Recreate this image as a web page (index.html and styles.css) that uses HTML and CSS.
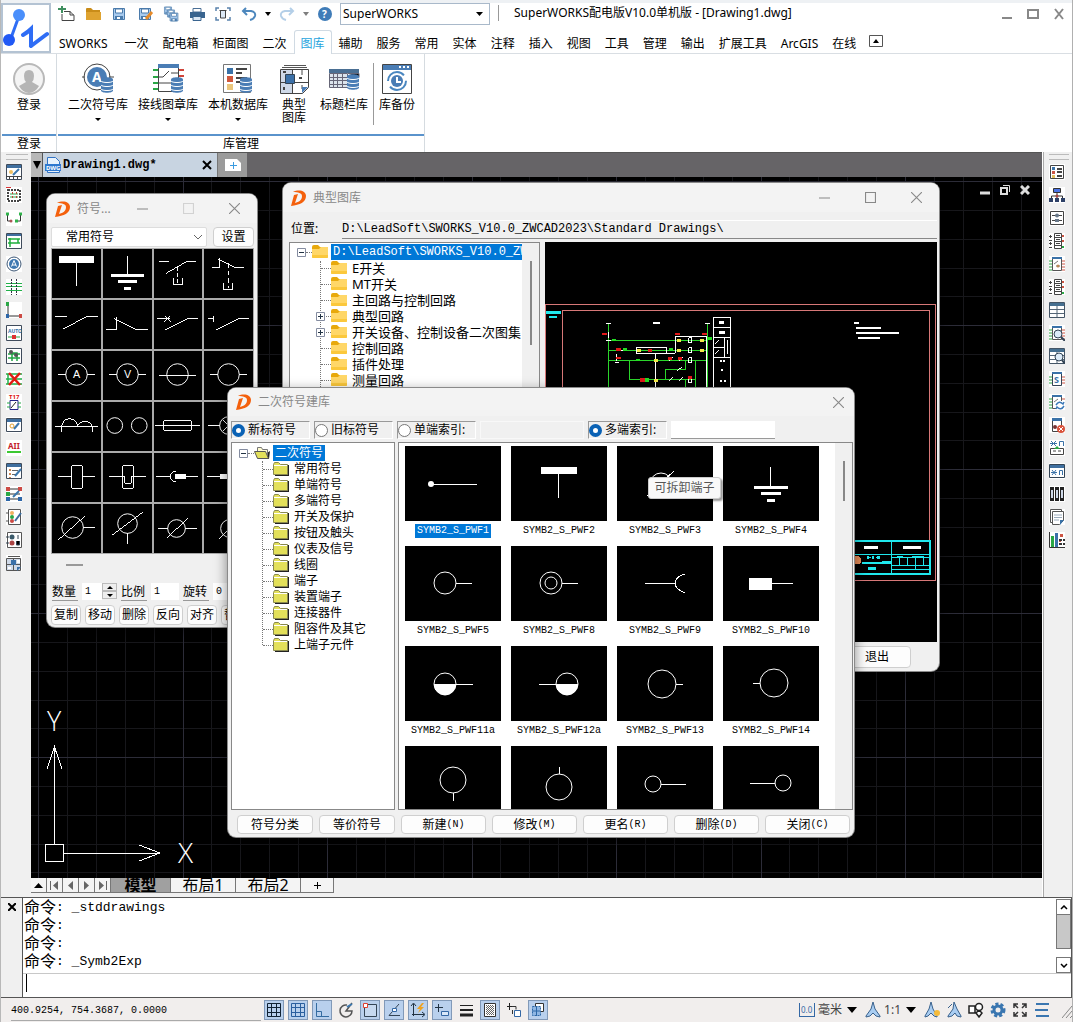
FILE: index.html
```html
<!DOCTYPE html>
<html lang="zh-CN">
<head>
<meta charset="utf-8">
<title>SuperWORKS配电版V10.0单机版 - [Drawing1.dwg]</title>
<link rel="stylesheet" href="styles.css">
</head>
<body>
<svg class="defs" aria-hidden="true">
  <defs>
    <pattern id="grid" width="289" height="144" patternUnits="userSpaceOnUse" x="7" y="4">
      <path d="M29.500 0V144M58.500 0V144M87.500 0V144M116.500 0V144M173.500 0V144M202.500 0V144M231.500 0V144M260.500 0V144M0 29.500H289M0 58.500H289M0 87.500H289M0 115.500H289" stroke="#17171b"/>
      <path d="M.5 0V144M145.500 0V144M0 .5H289" stroke="#2c2c38"/>
    </pattern>
  </defs>
  <symbol id="brand" viewBox="0 0 16 16"><path fill="#f4600c" d="M3 2C9-1 16 1 16 6c0 6-6 9-15 10L4 5l4-1-3 9c4-1 7-3 7-7 0-3-4-4-9-4z"/></symbol>
  <symbol id="folder" viewBox="0 0 16 14"><path fill="#e8a90c" d="M0 2q0-2 2-2h4l2 2h7v4H0z"/><path fill="#ffd768" d="M0 4h7l2-2h7v10q0 1-1 1H1q-1 0-1-1z"/><path fill="#fbc83c" d="M0 10h16v2q0 1-1 1H1q-1 0-1-1z"/></symbol>
  <symbol id="oldfolder" viewBox="0 0 16 14"><path fill="#222" d="M2 3h14v11H2z"/><path fill="#e3e05a" stroke="#8a8a50" d="M.5 12.500v-10l1-2h4l2 2h7v10z"/><path stroke="#fff" d="M1 3.500h13"/></symbol>
  <symbol id="openfolder" viewBox="0 0 16 14"><path fill="#222" d="M4 13h11l1-8z"/><path fill="#fffbd0" stroke="#777" d="M3.500 12V1.500h4l1 2h5V11"/><path fill="#e3e05a" stroke="#555" d="M.5 5.500h11l3 7h-11z"/></symbol>
  <symbol id="minus" viewBox="0 0 9 9"><path fill="#fff" stroke="#848ca0" d="M.5.5h8v8h-8z"/><path stroke="#234" d="M2 4.500h5"/></symbol>
  <symbol id="plus" viewBox="0 0 9 9"><path fill="#fff" stroke="#848ca0" d="M.5.5h8v8h-8z"/><path stroke="#234" d="M2 4.500h5M4.500 2v5"/></symbol>
  <symbol id="db" viewBox="0 0 12 16"><path fill="#4a7db5" d="M0 2.500C0-.5 12-.5 12 2.500v11c0 3-12 3-12 0z"/><path fill="none" stroke="#fff" d="M0 4c1 2 11 2 12 0M0 8c1 2 11 2 12 0M0 12c1 2 11 2 12 0"/></symbol>
  <symbol id="floppy" viewBox="0 0 14 14"><path fill="#a9cbee" stroke="#4b7bab" d="M1.500 1.500h11v11h-11z"/><path fill="#fff" stroke="#4b7bab" d="M3.500 2h7v4h-7z"/><path fill="#4b7bab" d="M3 9h8v4H3z"/><path fill="#fff" d="M5 10h3v2H5z"/></symbol>

  <symbol id="l1" viewBox="0 0 16 16"><path fill="#fff" stroke="#3f4b5b" d="M.5.500h15v15H.5z"/><path fill="#3f6f9f" d="M1 1h14v3H1z"/><path stroke="#444" d="M0 12.500h16M3.500 12v3M7.500 12v3M11.500 12v3"/><circle cx="5" cy="8" r="2" fill="#f0c060"/><path stroke="#3d78ad" stroke-width="2" d="m7 11 6-6"/></symbol>
  <symbol id="l2" viewBox="0 0 16 16"><path fill="#fff" stroke="#444" stroke-dasharray="2 1" stroke-width="2" d="M2 3h12v11H2z"/><path stroke="#d33" d="M0 .5h5"/><path stroke="#2fa34a" d="M4 7h8M4 10h8"/><path stroke="#b43" stroke-dasharray="2 2" d="M6.500 5v7M10.500 5v7"/></symbol>
  <symbol id="l3" viewBox="0 0 16 16"><path fill="none" stroke="#333" d="M1.500 3v8h4M14.500 3v8h-4"/><path stroke="#2fb24a" stroke-width="3" d="M0 4h3M13 4h3M9 11h3"/><circle cx="5" cy="11" r="1.500" fill="#a55"/></symbol>
  <symbol id="l4" viewBox="0 0 16 16"><path fill="#fff" stroke="#3f4b5b" d="M.5.5h15v15H.5z"/><path fill="#3f6f9f" d="M1 1h14v2H1z"/><path fill="none" stroke="#1fae3c" stroke-width="1.500" d="M2 6h12M2 10h12M4 5v9M12 6v4"/></symbol>
  <symbol id="l5" viewBox="0 0 16 16"><circle cx="8" cy="8" r="7" fill="#fff" stroke="#3b5573"/><circle cx="8" cy="8" r="5" fill="#3f78b0"/><path fill="none" stroke="#fff" d="m5.500 10.500 2.500-6 2.500 6M6 9h4"/></symbol>
  <symbol id="l6" viewBox="0 0 16 16"><path fill="none" stroke="#22b04a" d="M0 4.500h16M0 7.500h16M0 11.500h16"/><path stroke="#334" stroke-dasharray="2 1" d="M5.500 0v16M10.500 0v16"/></symbol>
  <symbol id="l7" viewBox="0 0 16 16"><path fill="none" stroke="#333" d="M2 2v12h12"/><path fill="#2aa745" d="M0 0h3v4H0z"/><path fill="#2d66a8" d="M0 12h3v4H0z"/><path fill="#cc4a44" d="M13 12h3v4h-3z"/></symbol>
  <symbol id="l9" viewBox="0 0 16 16"><path fill="#fff" stroke="#3f4b5b" d="M.5.5h15v15H.5z"/><path fill="none" stroke="#22a544" stroke-width="1.500" d="M2 6h12M2 10h12M6 13V5h5v8"/><circle cx="5" cy="4" r="2" fill="#555"/><circle cx="10" cy="7" r="2" fill="#555"/></symbol>
  <symbol id="l10" viewBox="0 0 16 16"><path fill="none" stroke="#22b04a" stroke-width="1.500" d="M0 3h16M0 8h16M0 13h16M2 3v10"/><path stroke="#e11b12" stroke-width="2.500" d="m3 2 11 12M14 2 3 14"/></symbol>
  <symbol id="l12" viewBox="0 0 16 16"><path fill="#fff" stroke="#3f4b5b" d="M.5 1.500h15v13H.5z"/><path fill="#3f6f9f" d="M1 2h14v3H1z"/><circle cx="6" cy="9" r="2" fill="#fff" stroke="#e0a030"/><path stroke="#3d78ad" stroke-width="2" d="m8 12 5-6"/></symbol>
  <symbol id="l14" viewBox="0 0 16 16"><path fill="#fff" stroke="#3f4b5b" d="M.5.5h15v15H.5z"/><path fill="#3f6f9f" d="M1 1h14v3H1z"/><path stroke="#c85" stroke-width="2" stroke-dasharray="2 2" d="M4 6v9"/><path stroke="#666" d="M6 7.500h6M6 11.500h4"/><path stroke="#3d78ad" stroke-width="2" d="m9 13 6-7"/></symbol>
  <symbol id="l15" viewBox="0 0 16 16"><path stroke="#333" d="M2 3h12M2 8h12M2 13h12"/><path fill="#cc4a44" d="M0 1h4v4H0zM12 1h4v4h-4z"/><path fill="#2aa745" d="M0 6h4v4H0z"/><path fill="#2d66a8" d="M0 11h4v4H0zM12 11h4v4h-4z"/><path stroke="#3d78ad" stroke-width="2" d="m7 11 6-6"/></symbol>
  <symbol id="l16" viewBox="0 0 16 16"><path fill="#fff" stroke="#555" d="M2.500.5h12v15h-12z"/><circle cx="6" cy="4" r="2" fill="#f0b060"/><circle cx="6" cy="8" r="2" fill="#2aa745"/><circle cx="6" cy="12" r="2" fill="#cc4a44"/><path stroke="#3d6c9c" stroke-width="2" d="m9 12 6-8"/><path stroke="#555" d="M0 4h2M0 12h2"/></symbol>
  <symbol id="l17" viewBox="0 0 16 16"><path fill="#fff" stroke="#555" d="M1.500.5h14v15h-14z"/><circle cx="6" cy="5" r="2.500" fill="#3a5a6a"/><circle cx="6" cy="11" r="2.500" fill="#a44"/><path stroke="#345" d="M12 3v4M10.500 9v4h3V9M0 5h3M0 11h3"/></symbol>
  <symbol id="l18" viewBox="0 0 16 16"><path fill="#cfd9e8" stroke="#555" d="M.5 3.500h14v12H.5z"/><path stroke="#555" d="M2 1.500h12M7.500 3v12M0 9.500h15"/><path fill="#3b70a8" d="M5 5h5v5H5zM11 12h4l-4 4z"/><path fill="#fff" d="M2 12h3v2H2zM11 5h3v3h-3z"/></symbol>

  <symbol id="r1" viewBox="0 0 16 16"><path fill="#fff" stroke="#444" d="M1.500 1.500h13v13h-13z"/><path stroke="#444" stroke-width="2" d="M8 5h5M8 8h5M8 12h5"/><path fill="#3a72a8" d="M3 3h3v3H3z"/><path fill="#c54" d="M3 7h3v3H3z"/><path fill="#e5c060" d="M3 11h3v3H3z"/></symbol>
  <symbol id="r2" viewBox="0 0 16 16"><path fill="#4b74e8" stroke="#333" d="M4.500 1.500h7v4h-7z"/><path fill="none" stroke="#333" d="M8 5v4M2.500 12V9h11v3M8 9v3"/><path fill="#2c3f66" d="M0 11h4v4H0zM6 11h4v4H6zM12 11h4v4h-4z"/><circle cx="8" cy="9" r="1.500" fill="#a44"/></symbol>
  <symbol id="r3" viewBox="0 0 16 16"><path fill="#fff" stroke="#444" d="M1.500 1.500h13v13h-13z"/><path stroke="#444" d="M3 5.500h10M3 10.500h10"/><circle cx="8" cy="5.500" r="2" fill="#68788a"/><path fill="#68788a" d="M6 9h4v3H6z"/></symbol>
  <symbol id="r4" viewBox="0 0 16 16"><path fill="#fff" stroke="#444" d="M5.500.5h7v15h-7zM5.500 4.500h7M5.500 8.500h7M5.500 12.500h7M7 2.500h4M7 6.500h4M7 10.500h4"/><path stroke="#444" d="M0 3.500h3M1.500 2v3M0 7.500h3M0 10.500h3M1.500 9v3M0 14.500h3"/><path stroke="#2aa745" stroke-width="2" d="M13 14h2"/><path stroke="#c54" stroke-width="2" d="M13 3h2M13 8h2"/></symbol>
  <symbol id="r5" viewBox="0 0 16 16"><path fill="#fff" stroke="#555" d="M3.500 1.500h9v13h-9z"/><path fill="#3a72a8" d="M3 1h10v2H3z"/><path stroke="#2aa745" d="M0 5h3M0 8h3M0 11h3M0 14h3"/><path stroke="#c54" d="M13 5h3M13 8h3M13 11h3M13 14h3"/><path stroke="#777" d="m5 8 4-3M7 10h4"/><circle cx="9" cy="10" r="1.500" fill="#b85"/></symbol>
  <symbol id="r6" viewBox="0 0 16 16"><path fill="#fff" stroke="#456" d="M.5.500h15v15H.5z"/><path fill="#456f90" d="M1 1h14v3H1z"/><path stroke="#567" d="M1 7.500h14M1 11.500h14M8 4v11"/></symbol>
  <symbol id="r7" viewBox="0 0 16 16"><use href="#r5"/><circle cx="9" cy="9" r="4" fill="#dcebf8" stroke="#345"/><path stroke="#345" stroke-width="2" d="m12 12 4 4"/></symbol>
  <symbol id="r8" viewBox="0 0 16 16"><use href="#r6"/><circle cx="10" cy="9" r="4" fill="#dcebf8" stroke="#345"/><path stroke="#345" stroke-width="2" d="m13 12 3 4"/></symbol>
  <symbol id="r10" viewBox="0 0 16 16"><use href="#r5"/><path fill="#fff" d="M7 7h9v9H7z"/><path fill="none" stroke="#3a78b8" stroke-width="1.500" d="M7 11q3-5 7-1l1-2M15 12q-3 5-7 1l-1 2"/></symbol>
  <symbol id="r11" viewBox="0 0 16 16"><path fill="#fff" stroke="#444" d="M3.500 1.500h9v13h-9z"/><path fill="#3a72a8" d="M3 1h10v3H3z"/><circle cx="6" cy="10" r="2" fill="#733"/><circle cx="12" cy="12" r="4" fill="#d9533c"/><path stroke="#fff" d="m10 10 4 4M14 10l-4 4"/></symbol>
  <symbol id="r12" viewBox="0 0 16 16"><path fill="none" stroke="#3a72a8" d="m2 1 5 5M7 1 2 6M1 3.500h7M10.500 6V1.500h4V6"/><path fill="none" stroke="#444" d="M6 8.500H1.500v6h13v-6H10M4 11h3M9 11h3"/><path fill="#2aa745" d="m5 9 3-3 3 3z"/></symbol>
  <symbol id="r13" viewBox="0 0 16 16"><path fill="#fff" stroke="#345" d="M.5 1.500h15v13H.5z"/><path fill="#3f6f9f" d="M1 2h14v3H1z"/><path fill="none" stroke="#3a72a8" d="m3 7 4 5M7 7l-4 5M2 9.500h6M10.500 12V7.500h3V12"/></symbol>
  <symbol id="r14" viewBox="0 0 16 16"><path fill="#cfd9e8" stroke="#222" d="M1.500 1.500h3v13h-3zM6.500 1.500h3v13h-3zM11.500 1.500h3v13h-3z"/><path fill="#222" d="M1 1h4v3H1zM6 1h4v3H6zM11 1h4v3h-4zM1 12h4v3H1zM6 12h4v3H6zM11 12h4v3h-4z"/></symbol>
  <symbol id="r15" viewBox="0 0 16 16"><path fill="#fff" stroke="#555" d="M1.500.5h11v13h-11z"/><path fill="#fff" stroke="#555" d="M3.500 2.500h11v9l-4 4h-7z"/><path stroke="#9ab" d="M5 6h8M5 8.500h8M5 11h5"/><path fill="#3a72a8" d="M11 11h4l-4 5z"/></symbol>
  <symbol id="r16" viewBox="0 0 16 16"><path fill="none" stroke="#333" d="M.5 0v15.500H16"/><path fill="#2aa745" d="M2 4h3v11H2z"/><path fill="#3a72a8" d="M6 1h3v14H6z"/><path fill="#c54" d="M11 2h3v3h-3zM10 7h2v3h-2z"/><path stroke="#333" stroke-width="2" stroke-dasharray="3 1" d="M10 8h6M10 12h6"/></symbol>
</svg>

<header class="top">
  <button class="logo" aria-label="应用菜单"><svg viewBox="0 0 48 48" width="48" height="48"><g fill="none" stroke="#2f6df5" stroke-width="4" stroke-linecap="round"><path stroke-width="3" d="M17 12 9 34"/><path d="M21 31q5-3 8-6v17M29 42 45 30"/></g><circle cx="17" cy="11" r="6" fill="#4a8ffb"/><circle cx="7" cy="36" r="6" fill="#2159f5"/></svg></button>
  <div class="titlebar">
    <div class="quick">
      <button aria-label="新建"><svg viewBox="0 0 18 16"><path fill="#fff" stroke="#444" d="M6 5.500h6l4 4v5H4V8M12 5v4h4"/><path stroke="#3f8f5f" stroke-width="2" d="M4 0v7M0 3h8"/></svg></button>
      <button aria-label="打开"><svg viewBox="0 0 18 16"><path fill="#c98c19" d="M2 3q0-1 1-1h4l2 2h7v3H2z"/><path fill="#dfa330" d="M2 6h15v8H2z"/></svg></button>
      <button aria-label="保存"><svg viewBox="0 0 18 16"><use href="#floppy" x="2" y="1" width="14" height="14"/></svg></button>
      <button aria-label="另存为"><svg viewBox="0 0 18 16"><use href="#floppy" x="2" y="1" width="14" height="14"/><path stroke="#e78b29" stroke-width="3" d="m10 13 6-7"/></svg></button>
      <button aria-label="全部保存"><svg viewBox="0 0 18 16"><use href="#floppy" x="1" width="10" height="9"/><use href="#floppy" x="4" y="3" width="10" height="9"/><use href="#floppy" x="7" y="6" width="10" height="10"/></svg></button>
      <button aria-label="打印"><svg viewBox="0 0 18 16"><path fill="#fff" stroke="#4a6f96" d="M5 2.500h8V6H5z"/><path fill="#39648f" d="M2 6h15v6H2z"/><path fill="#dce8f5" stroke="#39648f" d="M5 10.500h8v4H5z"/></svg></button>
      <button aria-label="打印预览"><svg viewBox="0 0 18 16"><path fill="none" stroke="#5a82ad" stroke-width="1.500" d="M2 5V2h3M13 2h3v3M2 11v3h3M13 14h3v-3"/><path fill="#dce8f5" stroke="#444" d="M5.500 4.500h7M6.500 5v7h5V5"/></svg></button>
      <button aria-label="撤销"><svg viewBox="0 0 18 16"><path fill="none" stroke="#4d87bd" stroke-width="2" d="M6 2 3 5l4 4M3 5h8q5 1 4 5-1 3-5 4"/></svg></button>
      <button class="caret" aria-label="撤销列表"><svg viewBox="0 0 6 4"><path d="M0 0h6L3 4z"/></svg></button>
      <button aria-label="重做"><svg viewBox="0 0 18 16"><path fill="none" stroke="#b4cfe8" stroke-width="2" d="m12 2 3 3-4 4M15 5H7Q2 6 3 10q1 3 5 4"/></svg></button>
      <button class="caret dim" aria-label="重做列表"><svg viewBox="0 0 6 4"><path d="M0 0h6L3 4z"/></svg></button>
      <button aria-label="帮助"><svg viewBox="0 0 18 16"><circle cx="9" cy="8" r="7" fill="#3f7cb8"/><text x="6" y="12" font-size="10" font-weight="bold" fill="#fff">?</text></svg></button>
    </div>
    <div class="combo workspace-combo"><select aria-label="工作空间"><option>SuperWORKS</option></select><svg class="arr" viewBox="0 0 7 4"><path d="M0 0h7L3.500 4z"/></svg></div>
    <h1>SuperWORKS配电版V10.0单机版 - [Drawing1.dwg]</h1>
    <div class="winctl">
      <button aria-label="最小化"><svg viewBox="0 0 12 12"><path stroke="#888" stroke-width="2" d="M1 10h10"/></svg></button>
      <button aria-label="最大化"><svg viewBox="0 0 12 12"><path fill="none" stroke="#888" stroke-width="2" d="M1 2h10v8H1z"/></svg></button>
      <button aria-label="关闭"><svg viewBox="0 0 12 12"><path stroke="#888" stroke-width="2" d="m2 1 8 10M10 1 2 11"/></svg></button>
    </div>
  </div>
  <nav class="tabs">
    <a href="#">SWORKS</a><a href="#">一次</a><a href="#">配电箱</a><a href="#">柜面图</a><a href="#">二次</a><a href="#" class="on">图库</a><a href="#">辅助</a><a href="#">服务</a><a href="#">常用</a><a href="#">实体</a><a href="#">注释</a><a href="#">插入</a><a href="#">视图</a><a href="#">工具</a><a href="#">管理</a><a href="#">输出</a><a href="#">扩展工具</a><a href="#">ArcGIS</a><a href="#">在线</a>
    <button class="fold" aria-label="折叠功能区"><svg viewBox="0 0 14 12" width="14" height="12"><path fill="#fff" stroke="#555" d="M.5.5h13v11H.5z"/><path d="M4 8h6L7 4z"/></svg></button>
  </nav>
</header>

<section class="ribbon">
  <div class="group login">
    <div class="tools"><button><svg viewBox="0 0 32 32"><circle cx="16" cy="16" r="15" fill="#f4f4f4" stroke="#b9b9b9" stroke-width="2"/><path fill="#b5b5b5" d="M16 7q5 0 5 6 0 4-2 6l7 4q-4 7-10 7T6 23l7-4q-2-2-2-6 0-6 5-6z"/></svg>登录</button></div>
    <h2>登录</h2>
  </div>
  <div class="group library">
    <div class="tools">
      <button><svg viewBox="0 0 32 32"><circle cx="15" cy="14" r="13" fill="#fff" stroke="#444"/><circle cx="15" cy="14" r="10" fill="#4a7db5"/><path stroke="#444" d="M0 14h3M27 14h5"/><text x="10" y="19" font-size="14" font-weight="bold" fill="#fff">A</text><use href="#db" x="19" y="14" width="12" height="16"/></svg>二次符号库<i class="tri"></i></button>
      <button><svg viewBox="0 0 32 32"><path fill="#fff" stroke="#444" d="M6.500 1.500h20v27h-20z"/><path fill="#4a7db5" d="M6 1h21v4H6z"/><path stroke="#2aa745" stroke-width="2" d="M1 7h5M1 14h5M1 20h5M1 26h5"/><path stroke="#d0453a" stroke-width="2" d="M27 7h5M27 13h5"/><path fill="none" stroke="#444" d="M7 14h4l6-6M19 10h7M7 20h13"/><use href="#db" x="19" y="14" width="12" height="16"/></svg>接线图章库<i class="tri"></i></button>
      <button><svg viewBox="0 0 32 32"><path fill="#fff" stroke="#777" d="M1.500 1.500h27v28h-27z"/><path fill="#3a72a8" d="M5 5h6v6H5z"/><path fill="#d0583c" d="M5 13h6v6H5z"/><path fill="#eac67c" d="M5 21h6v6H5z"/><path stroke="#444" stroke-width="2" d="M14 6h11M14 10h6M14 15h11M14 19h4"/><use href="#db" x="18" y="14" width="12" height="16"/></svg>本机数据库<i class="tri"></i></button>
      <button><svg viewBox="0 0 32 32"><path stroke="#555" d="M6 2.500h22M4 4.500h25"/><path fill="#fff" stroke="#444" d="M2.500 6.500h28v18l-6 6h-22z"/><path fill="#cfd9e8" d="M3 7h11v23H3z"/><path stroke="#444" d="M14.500 7v23M3 19.500h27M24 7v5M24 22v4"/><path fill="#3b70a8" stroke="#345" d="M7.500 11.500h9v9h-9z"/><path fill="#4a7db5" d="M24 24h6l-6 6z"/><path stroke="#444" stroke-width="2" d="M6 24v3M5 9h3M21 15h3"/></svg>典型<br>图库</button>
      <button><svg viewBox="0 0 32 32"><path fill="#4a6f93" d="M1 6h30v4H1z"/><path fill="#dce4ec" stroke="#667" d="M1.500 10.500h18v14h-18z"/><path stroke="#667" d="M1 14.500h18M1 17.500h18M1 21.500h18M5.500 10v14M9.500 10v14M14.500 10v14M20 10.500h11v4"/><use href="#db" x="19" y="11" width="12" height="16"/></svg>标题栏库</button>
      <button class="backup"><svg viewBox="0 0 32 32"><path fill="#fff" stroke="#444" d="M1.500 1.500h29v29h-29z"/><path fill="#4a7db5" d="M2 2h28v5H2z"/><path stroke="#fff" stroke-width="2" stroke-dasharray="2 2" d="M18 4h12"/><circle cx="16" cy="18" r="9" fill="none" stroke="#4a87c0" stroke-width="2" stroke-dasharray="22 6"/><circle cx="16" cy="18" r="6" fill="#4a7db5"/><path fill="none" stroke="#fff" stroke-width="2" d="M16 14v5h4"/></svg>库备份</button>
    </div>
    <h2>库管理</h2>
  </div>
</section>

<main class="work">
  <div class="toolbar" role="toolbar" aria-label="左工具栏">
    <button><svg><use href="#l1"/></svg></button><button><svg><use href="#l2"/></svg></button><button><svg><use href="#l3"/></svg></button><button><svg><use href="#l4"/></svg></button><button><svg><use href="#l5"/></svg></button><button><svg><use href="#l6"/></svg></button><button><svg><use href="#l7"/></svg></button>
    <button><svg viewBox="0 0 16 16"><path fill="#fff" stroke="#3f4b5b" d="M.5.5h15v15H.5z"/><text x="2" y="8" font-size="5" font-weight="bold" fill="#3876ad">AUTO</text><path stroke="#2aa745" d="M2 12h12"/><path fill="#d33" d="M6 10h4v4H6z"/></svg></button>
    <button><svg><use href="#l9"/></svg></button><button><svg><use href="#l10"/></svg></button>
    <button><svg viewBox="0 0 16 16"><text x="3" y="5" font-size="6" font-weight="bold" fill="#d11">T17</text><path fill="#fff" stroke="#228" d="M4 6.500h8v9H4z"/><path stroke="#22a544" d="M1 9h3M1 13h3M12 9h3M12 13h3"/><path stroke="#222" d="m5 14 5-6"/></svg></button>
    <button><svg><use href="#l12"/></svg></button>
    <button><svg viewBox="0 0 16 16"><text x="2" y="9" font-size="8" font-weight="bold" fill="#c3202a">AII</text><path stroke="#3cc832" stroke-width="2" d="M1 12h14"/></svg></button>
    <button><svg><use href="#l14"/></svg></button><button><svg><use href="#l15"/></svg></button><button><svg><use href="#l16"/></svg></button><button><svg><use href="#l17"/></svg></button><button><svg><use href="#l18"/></svg></button>
  </div>

  <div class="document">
    <div class="doctabs">
      <button class="list" aria-label="文档列表"><svg viewBox="0 0 8 8" width="8" height="8"><path d="M0 0h8L4 8z"/></svg></button>
      <div class="doctab"><svg viewBox="0 0 16 16" width="16" height="16"><path fill="#e8f2fc" stroke="#3273c4" d="M2.500.5h8l4 4v11h-12z"/><path fill="#2e78cf" d="M0 7h16v7H0z"/><text x="1" y="13" font-size="6" font-weight="bold" fill="#fff">DWG</text></svg><span>Drawing1.dwg*</span><button aria-label="关闭文档"><svg viewBox="0 0 10 10" width="10" height="10"><path stroke="#000" stroke-width="2" d="m1 1 8 8M9 1 1 9"/></svg></button></div>
      <button class="newtab" aria-label="新建文档"><svg viewBox="0 0 16 12" width="16" height="12"><path fill="#fff" d="M0 0h12l4 4v8H0z"/><path stroke="#3a9be0" d="M5 6.500h7M8.500 3v7"/></svg></button>
    </div>

    <div class="canvas">
      <svg class="grid" width="100%" height="100%"><rect width="100%" height="100%" fill="url(#grid)"/></svg>
      <svg class="ucs" viewBox="0 0 160 160" width="160" height="160" fill="none" stroke="#fff" shape-rendering="crispEdges"><path d="M9.500 140.500h18v17h-18zM18.500 140V43M11 65l7.500-22L26 65M28 149.500h96M103 141l21 8-21 8"/><text x="11" y="27" font-size="27" fill="#fff" stroke="none">Y</text><text x="142" y="159" font-size="28" fill="#fff" stroke="none">X</text></svg>
      <div class="mdi">
        <button aria-label="最小化"><svg viewBox="0 0 10 10" width="10" height="10"><path stroke="#ddd" stroke-width="3" d="M0 8h10"/></svg></button>
        <button aria-label="还原"><svg viewBox="0 0 10 10" width="10" height="10"><path fill="none" stroke="#ddd" stroke-width="2" d="M1 3h6v6H1z"/><path fill="none" stroke="#ddd" d="M3 .5h6.500V7"/></svg></button>
        <button aria-label="关闭"><svg viewBox="0 0 10 10" width="10" height="10"><path stroke="#ddd" stroke-width="3" d="m1 1 8 8M9 1 1 9"/></svg></button>
      </div>

      <section class="win symbols">
        <div class="wtitle"><svg width="16" height="16"><use href="#brand"/></svg><h3>符号...</h3><span class="wctl"><button aria-label="最小化"><svg viewBox="0 0 10 10"><path d="M0 5.500h10"/></svg></button><button class="off" aria-label="最大化"><svg viewBox="0 0 10 10"><path d="M.5.5h9v9h-9z"/></svg></button><button aria-label="关闭"><svg viewBox="0 0 10 10"><path d="m0 0 10 10M10 0 0 10"/></svg></button></span></div>
        <div class="pick"><div class="combo"><select aria-label="符号分类"><option>常用符号</option></select><svg class="chev" viewBox="0 0 10 6"><path fill="none" stroke="#666" d="m1 1 4 4 4-4"/></svg></div><button class="btn">设置</button></div>
        <div class="cells">
          <button><svg viewBox="0 0 50 50"><path class="f" d="M7 7h36v7H7z"/><path d="M24.500 14v24"/></svg></button>
          <button><svg viewBox="0 0 50 50"><path d="M24.500 7v20"/><path class="f" d="M8 26h34v3H8zM15 32h20v3H15zM21 39h8v3h-8z"/></svg></button>
          <button><svg viewBox="0 0 50 50"><path d="M6 13h10M13 25l21-12h10"/><path stroke-dasharray="5 2" d="M25.500 17v18"/><path d="M20.500 30v6h10v-6"/></svg></button>
          <button><svg viewBox="0 0 50 50"><path d="M8 19h8V9M14 10l18 9h9"/><path stroke-dasharray="5 3" d="M24.500 14v26"/><path d="M19.500 35v6h10v-6"/></svg></button>
          <button><svg viewBox="0 0 50 50"><path d="M3 17h12M11 30l24-13h12"/></svg></button>
          <button><svg viewBox="0 0 50 50"><path d="M3 30h11V17M11 19l23 11h12"/></svg></button>
          <button><svg viewBox="0 0 50 50"><path d="M4 19h13M12 16l6 6M18 16l-6 6M12 31l23-12h11"/></svg></button>
          <button><svg viewBox="0 0 50 50"><path d="M4 19h5M9.500 16v6M12 31l24-12h10"/></svg></button>
          <button><svg viewBox="0 0 50 50"><circle cx="25" cy="24" r="11"/><path d="M6 24h8M36 24h8"/><text x="25" y="28">A</text></svg></button>
          <button><svg viewBox="0 0 50 50"><circle cx="25" cy="24" r="11"/><path d="M6 24h8M36 24h8"/><text x="25" y="28">V</text></svg></button>
          <button><svg viewBox="0 0 50 50"><circle cx="25" cy="24" r="11"/><path d="M6 25h38"/></svg></button>
          <button><svg viewBox="0 0 50 50"><circle cx="25" cy="24" r="11"/><path d="M6 24h8M36 24h8"/></svg></button>
          <button><svg viewBox="0 0 50 50"><path d="M3 25h44M10 31v-6a8 8 0 0 1 16 0 8 8 0 0 1 15 0v6"/></svg></button>
          <button><svg viewBox="0 0 50 50"><circle cx="12" cy="24" r="8"/><circle cx="37" cy="24" r="8"/></svg></button>
          <button><svg viewBox="0 0 50 50"><path d="M11 19h28v10H11zM2 24h46"/></svg></button>
          <button><svg viewBox="0 0 50 50"><circle cx="25" cy="24" r="9"/><path d="M4 24h12M34 24h12M19 18l12 12M31 18 19 30"/></svg></button>
          <button><svg viewBox="0 0 50 50"><path d="M20 13h11v23H20zM6 24h14M31 24h13"/></svg></button>
          <button><svg viewBox="0 0 50 50"><path d="M20 13h11v23H20zM6 24h16v7h7v-7h15"/></svg></button>
          <button><svg viewBox="0 0 50 50"><path d="M3 24h15M23 19q-5 0-5 5t5 5M34 24h12"/><path class="f" d="M22 21h12v6H22z"/></svg></button>
          <button><svg viewBox="0 0 50 50"><path d="M3 24h43"/><path class="f" d="M16 21h12v6H16z"/></svg></button>
          <button><svg viewBox="0 0 50 50"><circle cx="21" cy="24" r="11"/><path d="M6 37 34 12M32 24h12"/></svg></button>
          <button><svg viewBox="0 0 50 50"><circle cx="25" cy="20" r="10"/><path d="M9 32 41 8M25 30v11"/></svg></button>
          <button><svg viewBox="0 0 50 50"><circle cx="24" cy="25" r="9"/><path d="m14 35 22-21M5 25h10M33 25h12"/></svg></button>
          <button><svg viewBox="0 0 50 50"><circle cx="26" cy="25" r="9"/><path d="m15 36 22-21"/></svg></button>
        </div>
        <div class="hscroll"><i></i></div>
        <div class="fields"><label for="qty">数量</label><span class="spin"><input id="qty" value="1"><span><button aria-label="增加"><svg viewBox="0 0 6 3"><path d="M0 3h6L3 0z"/></svg></button><button aria-label="减少"><svg viewBox="0 0 6 3"><path d="M0 0h6L3 3z"/></svg></button></span></span><label for="ratio">比例</label><input id="ratio" value="1"><label for="rot">旋转</label><input id="rot" value="0"></div>
        <div class="actions"><button class="btn">复制</button><button class="btn">移动</button><button class="btn">删除</button><button class="btn">反向</button><button class="btn">对齐</button><button class="btn">替换</button></div>
      </section>

      <section class="win typical">
        <div class="wtitle"><svg width="16" height="16"><use href="#brand"/></svg><h3>典型图库</h3><span class="wctl"><button aria-label="最小化"><svg viewBox="0 0 10 10"><path d="M0 5.500h10"/></svg></button><button aria-label="最大化"><svg viewBox="0 0 10 10"><path d="M.5.5h9v9h-9z"/></svg></button><button aria-label="关闭"><svg viewBox="0 0 10 10"><path d="m0 0 10 10M10 0 0 10"/></svg></button></span></div>
        <div class="pathrow"><label for="path">位置:</label><input id="path" readonly value="D:\LeadSoft\SWORKS_V10.0_ZWCAD2023\Standard Drawings\"></div>
        <div class="panes">
          <div class="treebox">
            <ul class="tree">
              <li class="root"><svg class="ex"><use href="#minus"/></svg><svg class="fo"><use href="#folder"/></svg><a href="#" class="sel">D:\LeadSoft\SWORKS_V10.0_ZW</a></li>
              <li><svg class="fo"><use href="#folder"/></svg><a href="#">E开关</a></li>
              <li><svg class="fo"><use href="#folder"/></svg><a href="#">MT开关</a></li>
              <li><svg class="fo"><use href="#folder"/></svg><a href="#">主回路与控制回路</a></li>
              <li><svg class="ex"><use href="#plus"/></svg><svg class="fo"><use href="#folder"/></svg><a href="#">典型回路</a></li>
              <li><svg class="ex"><use href="#plus"/></svg><svg class="fo"><use href="#folder"/></svg><a href="#">开关设备、控制设备二次图集</a></li>
              <li><svg class="fo"><use href="#folder"/></svg><a href="#">控制回路</a></li>
              <li><svg class="fo"><use href="#folder"/></svg><a href="#">插件处理</a></li>
              <li><svg class="fo"><use href="#folder"/></svg><a href="#">测量回路</a></li>
            </ul>
            <div class="vscroll"><i></i></div>
          </div>
          <svg class="preview" viewBox="0 0 393 401" preserveAspectRatio="xMinYMin" fill="none" shape-rendering="crispEdges">
            <path stroke="#d87878" d="M.5 62.500h391v277H.5zM17.500 68.500h368v265h-368z"/>
            <path fill="#1fe8ee" d="M1 69h15v3H1zM4 74h8v2H4z"/>
            <g stroke="#2bd62b"><path d="M63.500 81v160M162.500 81v160M63 98.500h99M63 108.500h99M63 118.500h99M84.500 118v20h66V118M120.500 138v-10h20v-10M140.500 138v60M150.500 138v60"/></g>
            <path stroke="#fff" d="M91.500 105.500h30v6h9V94.500h31V200M91.500 105v6.500h30M110.500 111v90M168.500 75.500h17V230M168.500 75v160M168 85.500h18M168 95.500h18M168 105.500h11M168 115.500h18M179.500 95v20M61 81.500h5M160 81.500h5M63.500 90v6M61 98.500h5M71.500 112v7M70 121h4M76 109h6M182.500 98v14M144 96h3v5h-3zM144 106h3v5h-3zM144 116h3v5h-3zM144 136h3v5h-3zM124 119l4-3M134 119l4-3M124 139l4-3M134 139l4-3M132 129l5-3M171 102l4-4M171 112l4-4"/>
            <path fill="#fff" d="M108 80h7v2h-7zM174 79h5v3h-5zM174 89h6v3h-6zM175 118h2v2h-2zM178 118h2v2h-2zM176 127h2v2h-2zM175 138h2v2h-2zM179 138h2v2h-2zM310 80h5v2h-5zM312 85h25v2h-25zM312 90h43v2h-43zM314 95h22v2h-22z"/>
            <path fill="#e01818" d="M57 91h5v2h-5zM71 106h5v3h-5zM71 115h5v2h-5zM95 136h5v4h-5zM103 107h4v3h-4zM130 91h5v2h-5zM157 91h5v2h-5zM123 115h4v3h-4zM133 115h4v3h-4zM143 134h4v3h-4z"/>
            <path fill="#23dc23" d="M67 97h4v2h-4zM78 106h4v3h-4zM91 117h4v2h-4zM124 106h4v3h-4zM162 95h5v3h-5zM100 136h4v4h-4z"/>
            <path fill="#f5e84a" d="M132 97h4v3h-4zM132 107h4v3h-4zM155 97h4v3h-4zM155 107h4v3h-4zM92 107h4v3h-4zM109 117h4v3h-4zM109 137h4v3h-4z"/>
            <g stroke="#1fe8ee"><path stroke-width="2" d="M250 300h136v33H250"/><path d="M250 313.500h136M347.500 300v33M347 316.500h38M347 324.500h38M347 328.500h38M355.500 316v8M363.500 316v8M371.500 316v12M379.500 316v8M323 316h4M332 316h4M338 320h10"/></g>
            <path fill="#1fe8ee" d="M323 315h2v3h-2zM328 315h2v3h-2zM333 315h3v3h-3zM318 321h29v2h-29zM324 326h8v3h-8zM353 315h6v2h-6zM368 315h12v2h-12z"/>
            <path fill="#fff" d="M320 305h14v3h-14zM359 305h18v3h-18z"/><circle cx="313" cy="319" r="4" fill="#e88e5a"/>
          </svg>
        </div>
        <div class="exit"><button class="btn">退出</button></div>
      </section>

      <section class="win builder">
        <div class="wtitle"><svg width="16" height="16"><use href="#brand"/></svg><h3>二次符号建库</h3><span class="wctl"><button aria-label="关闭"><svg viewBox="0 0 10 10"><path d="m0 0 10 10M10 0 0 10"/></svg></button></span></div>
        <div class="filters">
          <label><input type="radio" name="std" checked>新标符号</label>
          <label><input type="radio" name="std">旧标符号</label>
          <label><input type="radio" name="idx">单端索引:</label>
          <input type="text" disabled aria-label="单端索引">
          <label><input type="radio" name="idx" checked>多端索引:</label>
          <input type="text" aria-label="多端索引">
        </div>
        <div class="panes">
          <div class="treebox">
            <ul class="tree old">
              <li class="root"><svg class="ex"><use href="#minus"/></svg><svg class="fo"><use href="#openfolder"/></svg><a href="#" class="sel">二次符号</a></li>
              <li><svg class="fo"><use href="#oldfolder"/></svg><a href="#">常用符号</a></li>
              <li><svg class="fo"><use href="#oldfolder"/></svg><a href="#">单端符号</a></li>
              <li><svg class="fo"><use href="#oldfolder"/></svg><a href="#">多端符号</a></li>
              <li><svg class="fo"><use href="#oldfolder"/></svg><a href="#">开关及保护</a></li>
              <li><svg class="fo"><use href="#oldfolder"/></svg><a href="#">按钮及触头</a></li>
              <li><svg class="fo"><use href="#oldfolder"/></svg><a href="#">仪表及信号</a></li>
              <li><svg class="fo"><use href="#oldfolder"/></svg><a href="#">线圈</a></li>
              <li><svg class="fo"><use href="#oldfolder"/></svg><a href="#">端子</a></li>
              <li><svg class="fo"><use href="#oldfolder"/></svg><a href="#">装置端子</a></li>
              <li><svg class="fo"><use href="#oldfolder"/></svg><a href="#">连接器件</a></li>
              <li><svg class="fo"><use href="#oldfolder"/></svg><a href="#">阻容件及其它</a></li>
              <li><svg class="fo"><use href="#oldfolder"/></svg><a href="#">上端子元件</a></li>
            </ul>
          </div>
          <div class="gallery">
            <div class="thumbs">
              <button class="on"><svg viewBox="0 0 96 75"><circle class="f" cx="26" cy="38" r="3"/><path d="M26 38h46"/></svg><span>SYMB2_S_PWF1</span></button>
              <button><svg viewBox="0 0 96 75"><path class="f" d="M30 21h36v7H30z"/><path d="M47.500 28v24"/></svg><span>SYMB2_S_PWF2</span></button>
              <button><svg viewBox="0 0 96 75"><circle cx="44" cy="38" r="11"/><path d="m30 50 27-25"/></svg><span>SYMB2_S_PWF3</span></button>
              <button><svg viewBox="0 0 96 75"><path d="M47.500 21v20"/><path class="f" d="M31 40h34v3H31zM38 46h20v3H38zM44 53h8v3h-8z"/></svg><span>SYMB2_S_PWF4</span></button>
              <button><svg viewBox="0 0 96 75"><circle cx="40" cy="37" r="11"/><path d="M51 37h16"/></svg><span>SYMB2_S_PWF5</span></button>
              <button><svg viewBox="0 0 96 75"><circle cx="40" cy="37" r="11"/><circle cx="40" cy="37" r="6"/><path d="M51 37h16"/></svg><span>SYMB2_S_PWF8</span></button>
              <button><svg viewBox="0 0 96 75"><path d="M28 37h30M68 28q-10 3-10 9t10 10"/></svg><span>SYMB2_S_PWF9</span></button>
              <button><svg viewBox="0 0 96 75"><path class="f" d="M26 32h23v12H26z"/><path d="M49 37h21"/></svg><span>SYMB2_S_PWF10</span></button>
              <button><svg viewBox="0 0 96 75"><circle cx="40" cy="38" r="11"/><path class="f" d="M29 38h22a11 11 0 0 1-22 0z"/><path d="M50 38h18"/></svg><span>SYMB2_S_PWF11a</span></button>
              <button><svg viewBox="0 0 96 75"><circle cx="56" cy="38" r="11"/><path class="f" d="M45 38h22a11 11 0 0 1-22 0z"/><path d="M28 38h18"/></svg><span>SYMB2_S_PWF12a</span></button>
              <button><svg viewBox="0 0 96 75"><circle cx="45" cy="38" r="14"/><path d="M59 38h7"/></svg><span>SYMB2_S_PWF13</span></button>
              <button><svg viewBox="0 0 96 75"><circle cx="51" cy="37" r="14"/><path d="M30 37h7"/></svg><span>SYMB2_S_PWF14</span></button>
              <button><svg viewBox="0 0 96 75"><circle cx="48" cy="34" r="13"/><path d="M48.500 47v8"/></svg></button>
              <button><svg viewBox="0 0 96 75"><circle cx="48" cy="41" r="13"/><path d="M48.500 21v7"/></svg></button>
              <button><svg viewBox="0 0 96 75"><circle cx="36" cy="38" r="8"/><path d="M44 38h25"/></svg></button>
              <button><svg viewBox="0 0 96 75"><circle cx="60" cy="37" r="8"/><path d="M27 37h25"/></svg></button>
            </div>
            <div class="vscroll"><i></i></div>
            <div class="tip" role="tooltip">可拆卸端子</div>
          </div>
        </div>
        <div class="foot"><button class="btn s">符号分类</button><button class="btn s">等价符号</button><button class="btn">新建<tt>(N)</tt></button><button class="btn">修改<tt>(M)</tt></button><button class="btn">更名<tt>(R)</tt></button><button class="btn">删除<tt>(D)</tt></button><button class="btn">关闭<tt>(C)</tt></button></div>
      </section>
    </div>

    <div class="layouts">
      <button aria-label="展开"><svg viewBox="0 0 9 9"><path d="M0 7h9L4.500 2z"/></svg></button>
      <button class="nav" aria-label="第一个"><svg viewBox="0 0 9 9"><path d="M0 0h1v9H0zM8 0v9L3 4.500z"/></svg></button>
      <button class="nav" aria-label="上一个"><svg viewBox="0 0 9 9"><path d="M7 0v9L2 4.500z"/></svg></button>
      <button class="nav" aria-label="下一个"><svg viewBox="0 0 9 9"><path d="M2 0v9l5-4.500z"/></svg></button>
      <button class="nav" aria-label="最后一个"><svg viewBox="0 0 9 9"><path d="M8 0h1v9H8zM1 0v9l5-4.500z"/></svg></button>
      <button class="lay on">模型</button><button class="lay">布局1</button><button class="lay">布局2</button><button class="add" aria-label="添加布局"><svg viewBox="0 0 9 9"><path d="M1 4h7v1H1zM4 1h1v7H4z"/></svg></button>
    </div>
  </div>

  <div class="toolbar right" role="toolbar" aria-label="右工具栏">
    <button><svg><use href="#r1"/></svg></button><button><svg><use href="#r2"/></svg></button><button><svg><use href="#r3"/></svg></button><button><svg><use href="#r4"/></svg></button><button><svg><use href="#r5"/></svg></button><button><svg><use href="#r4"/></svg></button><button><svg><use href="#r6"/></svg></button><button><svg><use href="#r7"/></svg></button><button><svg><use href="#r8"/></svg></button>
    <button><svg viewBox="0 0 16 16"><path fill="#fff" stroke="#345" d="M3.500 1.500h9v13h-9z"/><path fill="#3a72a8" d="M3 1h10v2H3z"/><path stroke="#2aa745" d="M0 6h3M0 9h3M0 12h3"/><path stroke="#c54" d="M13 6h3M13 9h3M13 12h3"/><text x="5" y="12" font-size="9" font-weight="bold" fill="#3a72a8">S</text></svg></button>
    <button><svg><use href="#r10"/></svg></button><button><svg><use href="#r11"/></svg></button><button><svg><use href="#r12"/></svg></button><button><svg><use href="#r13"/></svg></button><button><svg><use href="#r14"/></svg></button><button><svg><use href="#r15"/></svg></button><button><svg><use href="#r16"/></svg></button>
  </div>
</main>

<section class="command">
  <div class="cmdside"><button aria-label="关闭命令行"><svg viewBox="0 0 8 8" width="8" height="8"><path stroke="#000" stroke-width="2" d="m0 0 8 8M8 0 0 8"/></svg></button></div>
  <div class="cmdbody">
    <div class="history">
      <div class="lines"><p><b>命令</b>: _stddrawings</p><p><b>命令</b>:</p><p><b>命令</b>:</p><p><b>命令</b>: _Symb2Exp</p></div>
      <div class="cmdscroll"><button aria-label="向上"><svg viewBox="0 0 8 5"><path fill="none" stroke="#000" stroke-width="1.500" d="m1 4 3-3 3 3"/></svg></button><i></i><button aria-label="向下"><svg viewBox="0 0 8 5"><path fill="none" stroke="#000" stroke-width="1.500" d="m1 1 3 3 3-3"/></svg></button></div>
    </div>
    <div class="prompt"><i></i><input aria-label="命令输入"></div>
  </div>
</section>

<footer class="status">
  <output>400.9254, 754.3687, 0.0000</output>
  <div class="modes">
    <button class="on" aria-label="捕捉"><svg viewBox="0 0 16 16"><path fill="none" stroke="#123" d="M1.500 1.500h13v13h-13zM5.500 2v12M10.500 2v12M2 5.500h12M2 10.500h12"/></svg></button>
    <button class="on" aria-label="栅格"><svg viewBox="0 0 16 16"><path fill="none" stroke="#2b5f9e" d="M1.500 1.500h13v13h-13zM5.500 2v12M10.500 2v12M2 5.500h12M2 10.500h12"/></svg></button>
    <button class="on" aria-label="正交"><svg viewBox="0 0 16 16"><path fill="none" stroke="#346ba0" d="M2.500 1v13.500H15M2.500 9.500h5v5"/></svg></button>
    <button aria-label="极轴"><svg viewBox="0 0 16 16"><path fill="none" stroke="#555" stroke-width="1.500" d="M9 3a6 6 0 1 0 5 6H8l6-8"/><path stroke="#3c78b0" stroke-width="2" d="m9 5 5-3"/></svg></button>
    <button class="on" aria-label="对象捕捉"><svg viewBox="0 0 16 16"><path fill="#c6d9f0" stroke="#345" d="M2.500 2.500h12v12h-12z"/><path fill="#fff" stroke="#e04030" d="M1.500 1.500h4v4h-4z"/></svg></button>
    <button class="on" aria-label="追踪"><svg viewBox="0 0 16 16"><path fill="none" stroke="#345" d="M13 2 3 13.500h11"/><path fill="#fff" stroke="#3468a5" d="M6.500 6.500h4v3h-4z"/></svg></button>
    <button class="on" aria-label="动态坐标"><svg viewBox="0 0 16 16"><path fill="none" stroke="#234" d="M3.500 14V2M1 4l2.500-3L6 4M2 12.500h12M12 10l3 2.500-3 2.500"/><path fill="#f0a21e" d="m12 1-5 6h3l-2 4 6-6h-3l3-4z"/></svg></button>
    <button class="on" aria-label="动态输入"><svg viewBox="0 0 16 16"><path stroke="#234" d="M1 5.500h8M4.500 2v8"/><path fill="#d9e8f9" stroke="#3468a5" d="M7.500 9.500h7v4h-7z"/></svg></button>
    <button aria-label="线宽"><svg viewBox="0 0 16 16"><path stroke="#222" d="M2 3.500h13"/><path stroke="#222" stroke-width="2" d="M2 8h13"/><path stroke="#222" stroke-width="3" d="M2 13h13"/></svg></button>
    <button class="on" aria-label="透明度"><svg viewBox="0 0 16 16"><path fill="#fff" stroke="#333" d="M2.500 1.500h11v13h-11z"/><path stroke="#666" stroke-dasharray="1 1" d="M4 3.500h8M5 4.500h7M4 5.500h8M5 6.500h7M4 7.500h8M5 8.500h7M4 9.500h8M5 10.500h7M4 11.500h8M5 12.500h7"/></svg></button>
    <button aria-label="快捷特性"><svg viewBox="0 0 16 16"><path stroke="#222" d="M1 4.500h6M3.500 1v7"/><path fill="none" stroke="#333" d="M6 4.500h4v3M6.500 8v4"/><path fill="#fff" stroke="#3468a5" d="M8.500 8.500h6v6h-6z"/></svg></button>
    <button class="on" aria-label="循环选择"><svg viewBox="0 0 16 16"><path fill="#fff" stroke="#333" d="M5.500 1.500h8v8h-8z"/><path fill="#8fb7e4" stroke="#2d68a8" stroke-dasharray="2 1" d="M2.500 4.500h8v9h-8z"/><path stroke="#2d68a8" d="M2 9h8M6.500 5v9"/></svg></button>
  </div>
  <div class="scale">
    <button aria-label="单位"><svg class="i" viewBox="0 0 16 16"><path stroke="#3468a5" d="M.5 1v14M15.500 1v14M0 14.500h16"/><text x="2" y="11" font-size="8" fill="#3468a5">0.0</text></svg><span>毫米</span><i class="tri"></i></button>
    <button aria-label="注释比例"><svg class="i" viewBox="0 0 16 16"><path fill="#a9cdf2" stroke="#39618c" d="M8 0 6 7l-5 7v1l4-1 3-3 3 3 4 1v-1l-5-7z"/></svg><span>1:1</span><i class="tri"></i></button>
    <button aria-label="注释可见"><svg class="i" viewBox="0 0 16 16"><path fill="#a9cdf2" stroke="#39618c" d="M7 0 5 7l-4 7v1l3-1 3-3 3 3 3 1v-1L9 7z"/><circle cx="13" cy="11" r="3" fill="#f5bb3c"/></svg></button>
    <button aria-label="自动比例"><svg class="i" viewBox="0 0 16 16"><path fill="#a9cdf2" stroke="#39618c" d="M8 0 7 7l-5 7v1l4-1 3-3 2 3 4 1v-1l-4-7zM2 6l4-4"/></svg></button>
    <button aria-label="隔离对象"><svg class="i" viewBox="0 0 16 16"><path fill="#fff" stroke="#222" stroke-width="1.500" d="M1 4h6v7H1zM11 8l3 3-3 4-3-4z"/><circle cx="11" cy="5" r="3.500" fill="#fff" stroke="#222" stroke-width="1.500"/></svg></button>
    <button aria-label="设置"><svg class="i" viewBox="0 0 16 16"><circle cx="8" cy="8" r="4" fill="none" stroke="#3a76b0" stroke-width="3"/><circle cx="8" cy="8" r="6" fill="none" stroke="#3a76b0" stroke-width="3" stroke-dasharray="3 2"/></svg></button>
    <button aria-label="全屏"><svg class="i" viewBox="0 0 16 16"><path fill="none" stroke="#333" stroke-width="1.500" d="M2 6V2h4M10 2h4v4M2 10v4h4M10 14h4v-4M2 2l4 4M14 2l-4 4M2 14l4-4M14 14l-4-4"/></svg></button>
    <button aria-label="菜单"><svg class="i" viewBox="0 0 16 16"><path stroke="#3a76b0" stroke-width="2" d="M2 2h13M1 8h13M2 14h13"/></svg></button>
    <svg class="grip" viewBox="0 0 10 12"><path stroke="#888" d="M0 12 10 0M4 12l6-7M8 12l2-2"/></svg>
  </div>
</footer>
</body>
</html>
```
FILE: styles.css
```css
* { box-sizing: border-box; }
html { height: 100%; }
body {
  margin: 0;
  min-height: 100vh;
  display: flex;
  flex-direction: column;
  font: 12px/16px "Noto Sans", "Noto Sans CJK SC", sans-serif;
  color: #000;
  background: #f0f0f0;
  border-left: 1px solid #b8b8b8;
  border-right: 1px solid #b0b0b0;
}
button, input, select { font: inherit; color: inherit; margin: 0; padding: 0; }
button { border: 0; background: none; display: flex; align-items: center; justify-content: center; flex: none; }
a { color: inherit; text-decoration: none; }
h1, h2, h3, p, ul { margin: 0; padding: 0; font: inherit; list-style: none; }
svg { display: block; flex: none; }
tt { font: 10px/16px "Liberation Mono", monospace; }
.defs { position: absolute; width: 0; height: 0; }
.tri { width: 0; height: 0; border: 3px solid transparent; border-top: 3px solid #000; border-bottom: 0; }

/* title bar and ribbon tabs */
.top {
  display: grid;
  grid-template: 27px 24px / 50px 1fr;
  background: #fff;
  border-top: 3px solid #eef1f4;
  border-bottom: 1px solid #d9dee3;
  height: 54px;
}
.logo { grid-row: 1 / 3; width: 50px; height: 50px; border: 2px solid #b4c3d3; background: #fff; overflow: hidden; }
.titlebar { display: flex; align-items: flex-start; }
.quick { display: flex; width: 289px; padding: 3px 0 0 3px; }
.quick button { width: 26px; height: 16px; }
.quick svg { width: 18px; height: 16px; }
.quick .caret { width: 12px; }
.quick .caret svg { width: 6px; height: 4px; }
.quick .dim { opacity: .5; }
.combo { display: grid; align-items: center; background: #fff; }
.combo select, .combo svg { grid-area: 1 / 1; }
.combo select { appearance: none; border: 0; background: none; width: 100%; height: 100%; outline: 0; }
.combo svg { justify-self: end; pointer-events: none; }
.workspace-combo { width: 150px; height: 22px; border: 1px solid #a9b9ca; padding-left: 2px; }
.workspace-combo .arr { width: 7px; height: 4px; margin-right: 6px; }
.titlebar h1 { margin: 2px 0 0 8px; padding-left: 15px; border-left: 1px solid #999; flex: 1; }
.winctl { display: flex; gap: 14px; padding: 5px 7px 0 0; }
.winctl svg { width: 12px; height: 12px; }
.tabs { display: flex; padding-left: 1px; height: 23px; }
.tabs a { padding: 5px 6px 0; border: 1px solid transparent; border-bottom: 0; height: 24px; white-space: nowrap; }
.tabs a:first-child { padding-right: 9px; }
.tabs .on { color: #27a5de; background: #fff; border-color: #d0dae3; border-radius: 3px 3px 0 0; }
.fold { height: 22px; margin-left: 6px; }

.ribbon { display: flex; height: 98px; background: #fff; padding-left: 1px; }
.group { display: flex; flex-direction: column; border-right: 1px solid #d5dbe0; }
.login { width: 55px; margin-right: 1px; }
.tools { flex: 1; display: flex; align-items: flex-start; justify-content: center; padding-top: 9px; }
.library .tools { padding: 9px 4px 0 5px; }
.tools button { flex-direction: column; line-height: 13px; padding: 0 5px; justify-content: flex-start; }
.tools button svg { width: 32px; height: 32px; margin-bottom: 3px; }
.tools .tri { margin-top: 7px; }
.tools .backup { border-left: 1px solid #999; height: 62px; }
.group h2 { border-top: 2px solid #5a93cc; text-align: center; height: 18px; line-height: 16px; }

/* workspace */
.work { flex: 1; display: flex; min-height: 0; }
.toolbar { width: 30px; padding: 2px 0 0 5px; }
.toolbar::before { content: ""; display: block; height: 4px; margin-right: 3px; border: solid #bbb; border-width: 1px 0; }
.toolbar button { width: 16px; height: 23px; }
.toolbar svg { width: 16px; height: 16px; background: #fff; }
.toolbar.right { padding-left: 6px; border-left: 1px solid #fff; box-shadow: inset 1px 0 #aaa; }
.document { flex: 1; min-width: 0; display: flex; flex-direction: column; }
.doctabs { display: flex; height: 25px; background: #666467; border-top: 1px solid #555; }
.doctabs .list { width: 12px; background: #b8b8b8; border-right: 1px solid #555; }
.doctab { display: flex; align-items: center; width: 174px; padding: 0 5px 0 2px; gap: 2px; background: #c8d4e1; }
.doctab span { flex: 1; font: bold 12px/16px "Liberation Mono", monospace; }
.newtab { width: 30px; background: #9b9b9b; border-left: 1px solid #777; }
.canvas { flex: 1; position: relative; overflow: hidden; background: #000; min-height: 700px; }
.grid { position: absolute; inset: 0; }
.ucs { position: absolute; left: 5px; bottom: 0; margin-bottom: 14px; font-family: "Open Sans", sans-serif; font-weight: 300; }
.mdi { position: absolute; right: 12px; top: 8px; display: flex; gap: 10px; }

/* floating windows */
.win { position: absolute; background: #f0f0f0; border-radius: 8px; box-shadow: 0 0 0 1px #8a8a8a, 0 4px 14px #0008; display: flex; flex-direction: column; overflow: hidden; }
.wtitle { display: flex; align-items: center; background: #f3f3f3; padding: 0 17px 0 7px; gap: 7px; color: #888; flex: none; }
.wtitle h3 { flex: 1; }
.wctl { display: flex; gap: 35px; }
.wctl svg { width: 11px; height: 11px; fill: none; stroke: #888; }
.wctl .off { opacity: .3; }
.btn { background: #fdfdfd; border: 1px solid #cfcfcf; border-radius: 4px; }

.symbols { left: 16px; top: 17px; width: 210px; height: 433px; padding: 0 3px 0 4px; }
.symbols .wtitle { height: 29px; margin: 0 -3px 0 -4px; }
.pick { display: flex; gap: 6px; height: 20px; margin: 4px 0 1px; }
.pick .combo { flex: 1; border: 1px solid #ddd; border-radius: 2px; }
.pick select { padding-left: 14px; }
.pick .chev { width: 10px; height: 6px; margin-right: 3px; }
.pick .btn { width: 41px; }
.cells { display: grid; grid-template-columns: repeat(4, 1fr); gap: 2px; padding: 1px; background: #aaa; }
.cells button { background: #000; height: 49px; overflow: hidden; }
.cells svg { width: 49px; height: 49px; }
.cells svg, .thumbs svg { fill: none; stroke: #fff; background: #000; shape-rendering: crispEdges; }
.cells circle, .thumbs circle { shape-rendering: auto; }
.cells .f, .thumbs .f { fill: #fff; stroke: none; }
.cells text { fill: #fff; stroke: none; font: 11px "Liberation Sans", sans-serif; text-anchor: middle; }
.hscroll { height: 28px; padding: 10px 15px; }
.hscroll i { display: block; width: 17px; height: 2px; background: #999; }
.fields { display: flex; align-items: center; gap: 4px; height: 19px; padding-left: 1px; }
.fields label { border-bottom: 1px solid #999; width: 26px; line-height: 17px; flex: none; }
.fields input { width: 28px; height: 17px; border: 0; background: #fff; padding-left: 3px; font: 10px/16px "Liberation Mono", monospace; }
.spin { display: flex; }
.spin input { width: 20px; }
.spin button { width: 15px; height: 8px; border: 1px solid #bbb; background: #eee; }
.spin svg { width: 6px; height: 3px; }
.actions { display: flex; gap: 4px; margin-top: 4px; height: 20px; }
.actions .btn { width: 30px; }

.typical { left: 252px; top: 6px; width: 656px; height: 488px; padding: 0 2px 0 6px; }
.typical .wtitle { height: 29px; margin: 0 -2px 0 -6px; }
.typical .pathrow { display: flex; align-items: center; gap: 24px; height: 20px; margin: 7px 0 3px; padding-left: 2px; }
.pathrow label { width: 27px; white-space: nowrap; }
.pathrow input { flex: 1; height: 19px; border: 0; border-top: 1px solid #fff; border-bottom: 1px solid #888; background: #f0f0f0; font: 12px/16px "Liberation Mono", monospace; }
.panes { display: flex; min-height: 0; flex: 1; }
.treebox { display: flex; background: #fff; border: 1px solid #888; overflow: hidden; }
.typical .treebox { width: 251px; margin-right: 5px; }
.tree { flex: 1; min-width: 0; overflow: hidden; font-size: 13px; position: relative; padding: 1px 0 0 7px; }
.tree::before { content: ""; position: absolute; left: 30px; top: 18px; bottom: 0; border-left: 1px dotted #777; }
.tree li { display: flex; align-items: center; height: 16px; padding-left: 34px; position: relative; white-space: nowrap; }
.tree li::before { content: ""; position: absolute; left: 24px; width: 10px; border-top: 1px dotted #777; }
.tree .root { padding-left: 0; }
.tree .root::before { left: 9px; width: 6px; }
.tree .ex { width: 9px; height: 9px; margin-left: -15px; margin-right: 6px; position: relative; }
.tree .root .ex { margin-left: 0; }
.tree .fo { width: 16px; height: 14px; }
.tree a { padding-left: 5px; line-height: 16px; }
.tree .sel { background: #0078d7; color: #fff; padding: 0 2px; margin-left: 3px; }
.typical .sel { font: 12px/16px "Liberation Mono", monospace; }
.vscroll { width: 17px; background: #f0f0f0; flex: none; }
.vscroll i { display: block; width: 2px; background: #888; margin: 18px auto 0; height: 84px; }
.preview { flex: 1; min-width: 0; height: 100%; background: #000; }
.exit { height: 29px; display: flex; align-items: center; justify-content: flex-end; padding-right: 26px; }
.exit .btn { width: 68px; height: 22px; }

.builder { left: 197px; top: 211px; width: 626px; height: 449px; padding: 0 1px 0 3px; }
.builder .wtitle { height: 28px; margin: 0 -1px 0 -3px; padding-right: 10px; }
.filters { display: flex; gap: 4px; height: 18px; margin: 5px 0 3px; }
.filters label { display: flex; align-items: center; gap: 3px; width: 79px; border: 1px solid #fff; border-top-color: #999; border-left-color: #999; }
.filters input[type=radio] { appearance: none; width: 13px; height: 13px; border: 1px solid #777; border-radius: 50%; background: #fff; }
.filters input[type=radio]:checked { border: 4px solid #0a62b5; }
.filters input[type=text] { width: 104px; height: 18px; border: 0; border-bottom: 1px solid #999; background: #fff; }
.filters input:disabled { background: #f0f0f0; border: 1px solid #f8f8f8; }
.builder .treebox { width: 164px; margin-right: 3px; }
.old { font-size: 12px; padding-top: 2px; }
.old::before { bottom: 164px; }
.gallery { flex: 1; display: flex; background: #fff; border: 1px solid #888; position: relative; overflow: hidden; }
.thumbs { flex: 1; display: grid; grid-template-columns: repeat(4, 96px); grid-auto-rows: 100px; gap: 0 10px; padding: 3px 0 0 6px; }
.thumbs button { flex-direction: column; justify-content: flex-start; font: 10px/14px "Liberation Mono", monospace; gap: 3px; }
.thumbs svg { width: 96px; height: 75px; }
.thumbs span { padding: 0 2px; }
.thumbs .on span { background: #0078d7; color: #fff; }
.gallery .vscroll i { height: 40px; }
.tip { position: absolute; left: 249px; top: 34px; width: 73px; height: 22px; line-height: 20px; text-align: center; background: #f9f9f9; color: #555; border: 1px solid #ccc; border-radius: 3px; box-shadow: 2px 2px 2px #0006; }
.foot { display: flex; gap: 6px; height: 27px; padding: 5px 0 3px 6px; }
.foot .btn { width: 85px; }
.foot .s { width: 76px; }

/* layout tabs */
.layouts { display: flex; height: 15px; margin-bottom: 4px; overflow: hidden; }
.layouts button { width: 16px; height: 15px; border: solid #777; border-width: 0 1px 1px 0; background: #f4f4f4; overflow: hidden; }
.layouts svg { width: 9px; height: 9px; }
.layouts .nav { fill: #666; }
.layouts .lay { width: 65px; font-size: 16px; line-height: 15px; }
.layouts .on { width: 60px; background: #a0a0a0; font-weight: bold; }
.layouts .add { width: 33px; }

/* command line */
.command { display: flex; height: 101px; border: 1px solid #555; border-left: 0; background: #fff; }
.cmdside { width: 22px; background: #f0f0f0; border-right: 1px solid #555; display: flex; justify-content: center; align-items: flex-start; padding-top: 5px; }
.cmdbody { flex: 1; display: flex; flex-direction: column; }
.history { display: flex; height: 76px; border-bottom: 1px solid #c8c8c8; }
.lines { flex: 1; padding: 1px; font: 13px/18px "Liberation Mono", monospace; }
.lines p { display: flex; height: 18px; white-space: pre; }
.lines b { font: 16px/14px "Noto Sans CJK SC", sans-serif; }
.cmdscroll { width: 15px; display: flex; flex-direction: column; margin-top: 1px; }
.cmdscroll button { height: 16px; border: 1px solid #777; background: #fff; }
.cmdscroll svg { width: 8px; height: 5px; }
.cmdscroll i { flex: 1; margin-bottom: 8px; background: #c8c8c8; border: solid #777; border-width: 0 1px 1px; }
.prompt { display: flex; padding: 0 3px; gap: 3px; height: 18px; }
.prompt i { width: 1px; background: #000; }
.prompt input { flex: 1; border: 0; outline: 0; }

/* status bar */
.status { display: flex; align-items: center; height: 24px; background: #f1eeed; padding: 0 0 0 10px; }
.status output { width: 250px; height: 22px; border-bottom: 1px solid #aaa; font: 10px/24px "Liberation Mono", monospace; margin-right: 3px; }
.modes { display: flex; gap: 4px; flex: 1; }
.modes button { width: 20px; height: 20px; border: 1px solid transparent; }
.modes .on { background: #b9d0ed; border-color: #8199b8; }
.modes svg { width: 16px; height: 16px; }
.scale { display: flex; align-items: center; gap: 6px; }
.scale button { gap: 3px; color: #444; }
.scale .i { width: 16px; height: 16px; }
.scale .tri { border-width: 6px 5px 0; margin: 0 2px; }
.scale .grip { width: 10px; height: 12px; align-self: flex-end; margin-left: 6px; }
```
